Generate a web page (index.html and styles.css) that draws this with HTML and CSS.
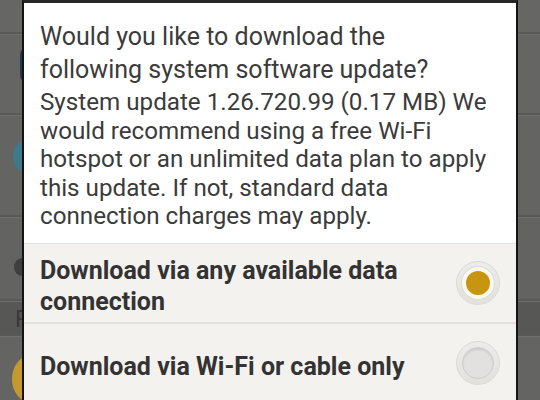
FILE: index.html
```html
<!DOCTYPE html>
<html>
<head>
<meta charset="utf-8">
<link rel="stylesheet" href="styles.css">
</head>
<body>
<div class="screen">
  <div class="bg">
    <div class="row r0"></div>
    <div class="row r1"><span class="app-icon blue"></span></div>
    <div class="row r2"><span class="app-icon teal"></span></div>
    <div class="row r3"><span class="dot"></span></div>
    <div class="row r4"><span class="letter">P</span></div>
    <div class="row r5"><span class="app-icon flower"></span></div>
  </div>
  <div class="dialog">
    <div class="message">
      <p class="title">Would you like to download the following system software update?</p>
      <p class="body">System update 1.26.720.99 (0.17 MB) We would recommend using a free Wi-Fi hotspot or an unlimited data plan to apply this update. If not, standard data connection charges may apply.</p>
    </div>
    <div class="options">
      <div class="option">
        <span class="label">Download via any available data connection</span>
        <span class="radio checked"><span class="inner"></span></span>
      </div>
      <div class="option">
        <span class="label">Download via Wi-Fi or cable only</span>
        <span class="radio"><span class="inner"></span></span>
      </div>
    </div>
  </div>
</div>
</body>
</html>
```
FILE: styles.css
```css
* { box-sizing: border-box; }
html, body { margin: 0; padding: 0; }
body {
  width: 540px;
  height: 400px;
  overflow: hidden;
  background: #626260;
  font-family: Roboto, "Noto Sans", sans-serif;
}
.screen {
  position: relative;
  width: 540px;
  height: 400px;
  overflow: hidden;
}
.bg {
  display: flex;
  flex-direction: column;
}
.row {
  border-bottom: 1px solid #6f6f6d;
  box-shadow: inset 0 -2px 0 #595957;
  display: flex;
  align-items: center;
  padding-left: 14px;
}
.r0 { height: 35px; background: #666664; }
.r1 { height: 81px; background: #656563; }
.r2 { height: 102px; background: #646462; }
.r3 { height: 84px; background: #636361; }
.r4 { height: 35px; background: #575755; }
.r5 { height: 70px; background: #646462; }
.app-icon { display: block; }
.blue { width: 30px; height: 36px; border-radius: 8px; background: #22364c; margin-left: 6px; margin-top: -20px; }
.teal { width: 32px; height: 34px; border-radius: 45% 40% 50% 50%; background: #3f7a8c; margin-left: -1px; margin-top: -20px; }
.dot { width: 16px; height: 18px; border-radius: 50%; background: #3e3e3e; margin-top: 14px; }
.letter { font-size: 24px; color: #3a3a3a; margin-left: 1px; }
.flower { width: 40px; height: 48px; border-radius: 50%; background: radial-gradient(circle at 65% 60%, #3f6a2a 0 35%, #c49a2c 36% 100%); margin-left: -2px; margin-top: 14px; }

.dialog {
  position: absolute;
  left: 22px;
  top: 0;
  width: 496px;
  height: 420px;
  background: #ffffff;
  border-left: 2px solid #141414;
  border-right: 2px solid #141414;
  border-top: 3px solid #262626;
  display: flex;
  flex-direction: column;
}
.message {
  padding: 17px 28px 0 16px;
  height: 240px;
  color: #3b3b3b;
}
.title {
  margin: 0;
  font-size: 25px;
  line-height: 33px;
}
.body {
  margin: 2px 0 0 0;
  font-size: 24.2px;
  line-height: 28.5px;
}
.options {
  background: #f4f2ef;
  border-top: 1px solid #e6e3de;
}
.option {
  height: 80px;
  display: flex;
  align-items: center;
  justify-content: space-between;
  padding: 0 16px;
  border-bottom: 2px solid #e4e1dc;
}
.label {
  font-weight: bold;
  font-size: 25px;
  line-height: 31px;
  color: #333333;
  max-width: 400px;
  margin-top: 6px;
}
.radio {
  width: 44px;
  height: 44px;
  border-radius: 50%;
  background: linear-gradient(#ececea, #e2e1de);
  border: 1px solid #dcdad6;
  display: flex;
  align-items: center;
  justify-content: center;
  flex: none;
}
.radio .inner {
  width: 32px;
  height: 32px;
  border-radius: 50%;
  background: #e2e1df;
  border: 1px solid #cfcdca;
  box-shadow: inset 0 2px 2px rgba(0,0,0,0.08);
}
.radio.checked .inner {
  background: #c8960e;
  border: 4px solid #fbf8f0;
  box-shadow: 0 0 0 1px #dedbd6;
}
```
